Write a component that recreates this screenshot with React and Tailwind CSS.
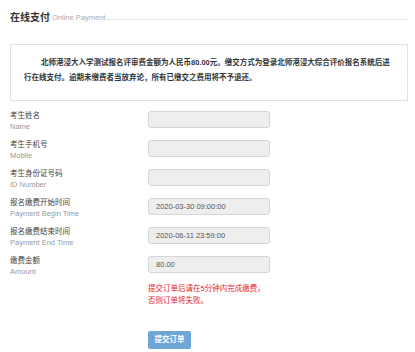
const rows = [
  { cn: '考生姓名', en: 'Name', value: '' },
  { cn: '考生手机号', en: 'Mobile', value: '' },
  { cn: '考生身份证号码', en: 'ID Number', value: '' },
  { cn: '报名缴费开始时间', en: 'Payment Begin Time', value: '2020-03-30 09:00:00' },
  { cn: '报名缴费结束时间', en: 'Payment End Time', value: '2020-06-11 23:59:00' },
  { cn: '缴费金额', en: 'Amount', value: '80.00' },
];

export default function App() {
  return (
    <div
      className="w-[415px] h-[352px] bg-white pl-[10px] pr-[7px] pt-[11px] overflow-hidden"
      style={{ fontFamily: '"Liberation Sans", "Noto Sans CJK SC", sans-serif' }}
    >
      {/* Title */}
      <div className="flex items-center h-[14px]">
        <h2 className="text-[10px] leading-[14px] font-bold text-[#333] whitespace-nowrap">在线支付</h2>
        <span className="ml-[2px] text-[7.5px] text-[#aaa] whitespace-nowrap">Online Payment</span>
        <div className="flex-1 ml-[1px] border-t border-[#e5e5e5] mt-[2px]" />
      </div>

      {/* Notice */}
      <div className="mt-[19px] h-[57px] border border-[#e2e2e2] px-[13px] pt-[10px]">
        <p className="text-[7.5px] leading-[15px] font-bold text-[#333] indent-[17px]">
          北师港浸大入学测试报名评审费金额为人民币80.00元。缴交方式为登录北师港浸大综合评价报名系统后进行在线支付。逾期未缴费者当放弃论，所有已缴交之费用将不予退还。
        </p>
      </div>

      {/* Form */}
      <div className="mt-[10px] flex flex-col gap-[12px]">
        {rows.map(r => (
          <div key={r.en} className="flex items-start h-[17px]">
            <div className="w-[138px] -mt-[1px]">
              <div className="text-[7.5px] leading-[11px] text-[#444] whitespace-nowrap">{r.cn}</div>
              <div className="text-[7.5px] leading-[11px] text-[#999] whitespace-nowrap">{r.en}</div>
            </div>
            <div className="w-[122px] h-[17px] bg-[#eeeeee] border border-[#d6d6d6] rounded-[3px] px-[7px] flex items-center text-[7.5px] text-[#555]">
              {r.value}
            </div>
          </div>
        ))}
      </div>

      <div className="ml-[138px] mt-[10px] text-[7.5px] leading-[12px] text-[#e8262a]">
        <div>提交订单后请在5分钟内完成缴费，</div>
        <div>否则订单将失败。</div>
      </div>

      <div className="ml-[138px] mt-[24px]">
        <button className="w-[43px] h-[18px] rounded-[2px] bg-[#6ea6d6] text-white text-[7.5px] font-bold flex items-center justify-center">
          提交订单
        </button>
      </div>
    </div>
  );
}
